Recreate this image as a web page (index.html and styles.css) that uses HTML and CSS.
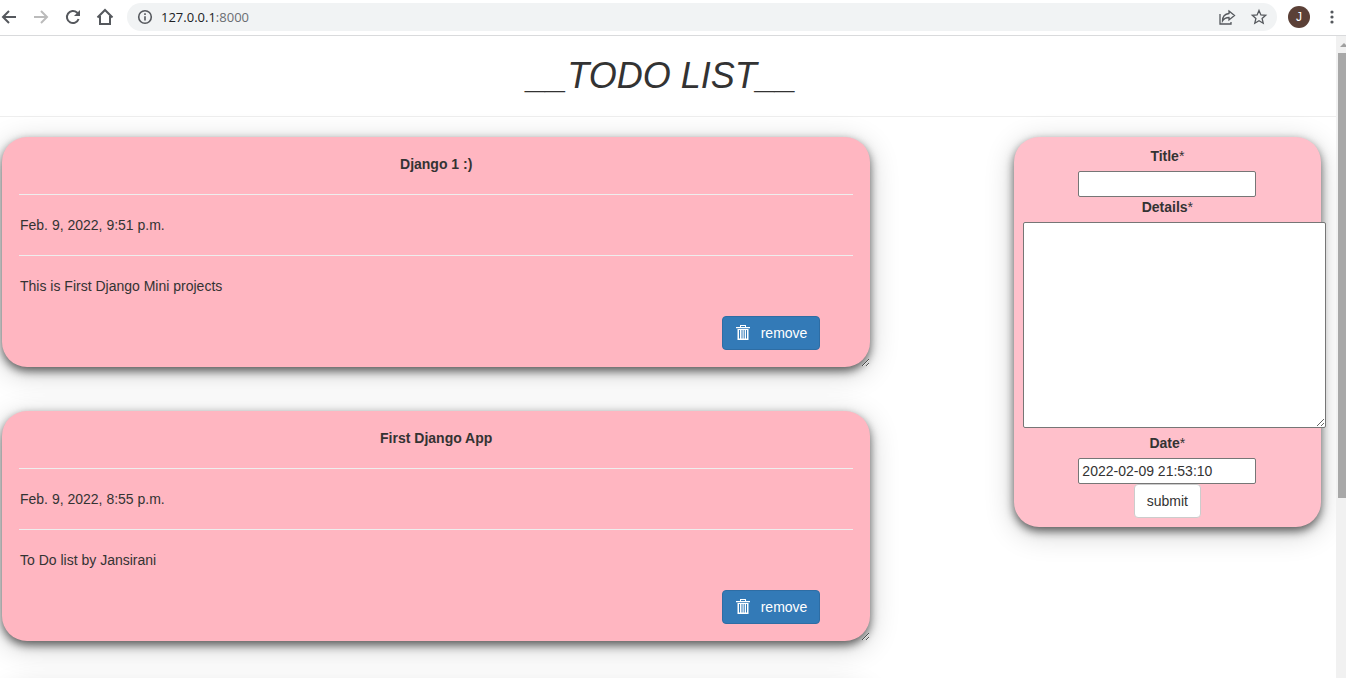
FILE: index.html
```html
<!DOCTYPE html>
<html lang="en">
<head>
<meta charset="utf-8">
<title>TODO LIST</title>
<link rel="stylesheet" href="styles.css">
</head>
<body>
<header class="toolbar">
  <button class="tool" type="button" aria-label="Back"><svg viewBox="0 0 18 18"><path d="M16 9H3M9 3L3 9l6 6"/></svg></button>
  <button class="tool tool-off" type="button" aria-label="Forward"><svg viewBox="0 0 18 18"><path d="M2 9h13M9 3l6 6-6 6"/></svg></button>
  <button class="tool" type="button" aria-label="Reload"><svg viewBox="0 0 18 18"><path d="M14.6 11A6 6 0 1 1 13 4.600l1.500 1.500"/><path class="solid" d="M16 2v6h-6z"/></svg></button>
  <button class="tool" type="button" aria-label="Home"><svg viewBox="0 0 18 18"><path d="M1.500 9.500L9 2l7.500 7.500M4 8v8h10V8"/></svg></button>
  <div class="address">
    <svg class="info" viewBox="0 0 16 16"><circle cx="8" cy="8" r="6.300"/><path d="M8 7.200v4.300M8 4.300v1.700"/></svg>
    <span class="url">127.0.0.1<span class="port">:8000</span></span>
    <button class="tool" type="button" aria-label="Share"><svg class="thin" viewBox="0 0 18 18"><path d="M2 6v10h11v-2M11 3l5.500 4.500L11 12V9.500c-3 0-5 1-6.500 3.500 0-4 2.500-7 6.500-7.500z"/></svg></button>
    <button class="tool" type="button" aria-label="Bookmark"><svg class="thin" viewBox="0 0 18 18"><path d="M9 2.500l1.900 4.400 4.800.400-3.600 3.200 1.100 4.700L9 12.700l-4.200 2.500 1.100-4.700-3.600-3.200 4.800-.400z"/></svg></button>
  </div>
  <button class="avatar" type="button">J</button>
  <button class="menu" type="button" aria-label="Menu"><svg viewBox="0 0 4 16"><circle cx="2" cy="3" r="1.600"/><circle cx="2" cy="8" r="1.600"/><circle cx="2" cy="13" r="1.600"/></svg></button>
</header>
<div class="viewport">
  <div class="page">
    <h1 class="heading">__TODO LIST__</h1>
    <main class="board">
      <section class="list">
        <article class="card">
          <h2 class="card-title">Django 1 :)</h2>
          <hr class="rule">
          <p class="line">Feb. 9, 2022, 9:51 p.m.</p>
          <hr class="rule">
          <p class="line">This is First Django Mini projects</p>
          <form class="actions"><button class="remove" type="button"><svg viewBox="0 0 14 16"><path d="M0 2h14v1.300H0zM4 2V0h6v2H9V1H5v1z"/><path fill-rule="evenodd" d="M1.500 4h11v11h-11zM3 5v8.500h1V5zM5.500 5v8.500h1V5zM7.700 5v8.500h1V5zM10 5v8.500h1V5z"/></svg>remove</button></form>
        </article>
        <article class="card">
          <h2 class="card-title">First Django App</h2>
          <hr class="rule">
          <p class="line">Feb. 9, 2022, 8:55 p.m.</p>
          <hr class="rule">
          <p class="line">To Do list by Jansirani</p>
          <form class="actions"><button class="remove" type="button"><svg viewBox="0 0 14 16"><path d="M0 2h14v1.300H0zM4 2V0h6v2H9V1H5v1z"/><path fill-rule="evenodd" d="M1.500 4h11v11h-11zM3 5v8.500h1V5zM5.500 5v8.500h1V5zM7.700 5v8.500h1V5zM10 5v8.500h1V5z"/></svg>remove</button></form>
        </article>
        <article class="card"></article>
      </section>
      <form class="entry">
        <label for="title"><b>Title</b>*</label>
        <input class="field" id="title" type="text">
        <label for="details"><b>Details</b>*</label>
        <textarea class="details" id="details"></textarea>
        <label for="date"><b>Date</b>*</label>
        <input class="field" id="date" type="text" value="2022-02-09 21:53:10">
        <button class="submit" type="button">submit</button>
      </form>
    </main>
  </div>
  <div class="scroll"><svg class="scroll-up" viewBox="0 0 8 4"><path d="M0 4l4-4 4 4z"/></svg><div class="thumb"></div></div>
</div>
</body>
</html>
```
FILE: styles.css
```css
* { box-sizing: border-box; }
body {
  margin: 0;
  height: 100vh;
  display: flex;
  flex-direction: column;
  overflow: hidden;
  background: #fff;
  color: #333;
  font: 14px/20px "Liberation Sans", Arial, sans-serif;
}
button, input, textarea { font: inherit; color: inherit; }
button { border: 0; padding: 0; background: none; }

/* Browser toolbar */
.toolbar {
  flex: none;
  display: flex;
  align-items: center;
  height: 36px;
  padding-bottom: 1px;
  border-bottom: 1px solid #d9dadc;
}
.tool { flex: none; width: 18px; height: 18px; margin-right: 14px; }
.tool svg { display: block; width: 18px; height: 18px; fill: none; stroke: #55585d; stroke-width: 2; }
.tool .solid { fill: #55585d; stroke: none; }
.tool .thin { stroke-width: 1.3; }
.tool-off svg { stroke: #bbb; }
.address {
  flex: 1;
  display: flex;
  align-items: center;
  height: 28px;
  padding-left: 10px;
  margin-left: -1px;
  margin-right: 11px;
  border-radius: 14px;
  background: #f1f3f4;
}
.address .tool:last-child { margin-right: 9px; }
.info { width: 16px; height: 16px; margin-right: 8px; fill: none; stroke: #55585d; stroke-width: 1.6; }
.url { flex: 1; font: 13px/20px "Open Sans", sans-serif; color: #202124; }
.port { color: #6a6d72; }
.avatar { width: 22px; height: 22px; border-radius: 50%; background: #5b4037; color: #fff; font: 12px/22px "Liberation Sans", sans-serif; }
.menu { width: 4px; height: 16px; margin: 0 12px 0 20px; }
.menu svg { display: block; width: 4px; height: 16px; fill: #55585d; }

/* Page */
.viewport { flex: 1; min-height: 0; display: flex; }
.page { flex: 1; min-width: 0; overflow: hidden; }
.heading {
  margin: 0 0 20px;
  padding: 20px 12px 20px 0;
  border-bottom: 1px solid #eee;
  font-size: 36px;
  font-style: italic;
  font-weight: 400;
  line-height: 40px;
  text-align: center;
}
.board { display: flex; justify-content: space-between; align-items: flex-start; }
.list { width: 65%; margin-left: 2px; display: flex; flex-direction: column; gap: 44px; }
.card, .entry {
  border-radius: 25px;
  box-shadow: 0 4px 10px rgba(0, 0, 0, .6), 0 6px 30px rgba(0, 0, 0, .2);
}
.card { min-height: 230px; padding: 17px; overflow: hidden; resize: both; background: #ffb6c1; }
.card-title { margin: 0; font-size: 14px; line-height: 20px; text-align: center; }
.rule { margin: 20px 0; border: 0; border-top: 1px solid #eee; }
.line { margin: 0 0 20px; padding-left: 1px; }
.actions { display: flex; justify-content: flex-end; padding-right: 33px; }
.remove {
  display: flex;
  align-items: center;
  gap: 11px;
  height: 34px;
  padding: 0 12px 0 13px;
  border: 1px solid #2e6da4;
  border-radius: 4px;
  background: #337ab7;
  color: #fff;
}
.remove svg { width: 14px; height: 16px; fill: #fff; }

.entry {
  width: 23%;
  min-width: 0;
  margin-right: 15px;
  padding: 9px;
  display: flex;
  flex-direction: column;
  align-items: center;
  background: #ffc0cb;
}
.entry label { margin-bottom: 5px; }
.field, .details { border: 1px solid #767676; border-radius: 2px; background: #fff; }
.field { width: 178px; height: 26px; padding: 1px 3px; }
.details { align-self: flex-start; width: 303px; height: 206px; margin-bottom: 5px; padding: 2px; resize: both; }
.submit { height: 34px; padding: 0 12px; border: 1px solid #ccc; border-radius: 4px; background: #fff; }

.scroll { flex: none; width: 10px; padding: 7px 0 0 2px; background: #f1f1f1; overflow: hidden; }
.scroll-up { display: block; width: 8px; height: 4px; margin: 0 0 6px 2px; fill: #a0a0a0; }
.thumb { height: 70%; background: #a8a8a8; }
```
